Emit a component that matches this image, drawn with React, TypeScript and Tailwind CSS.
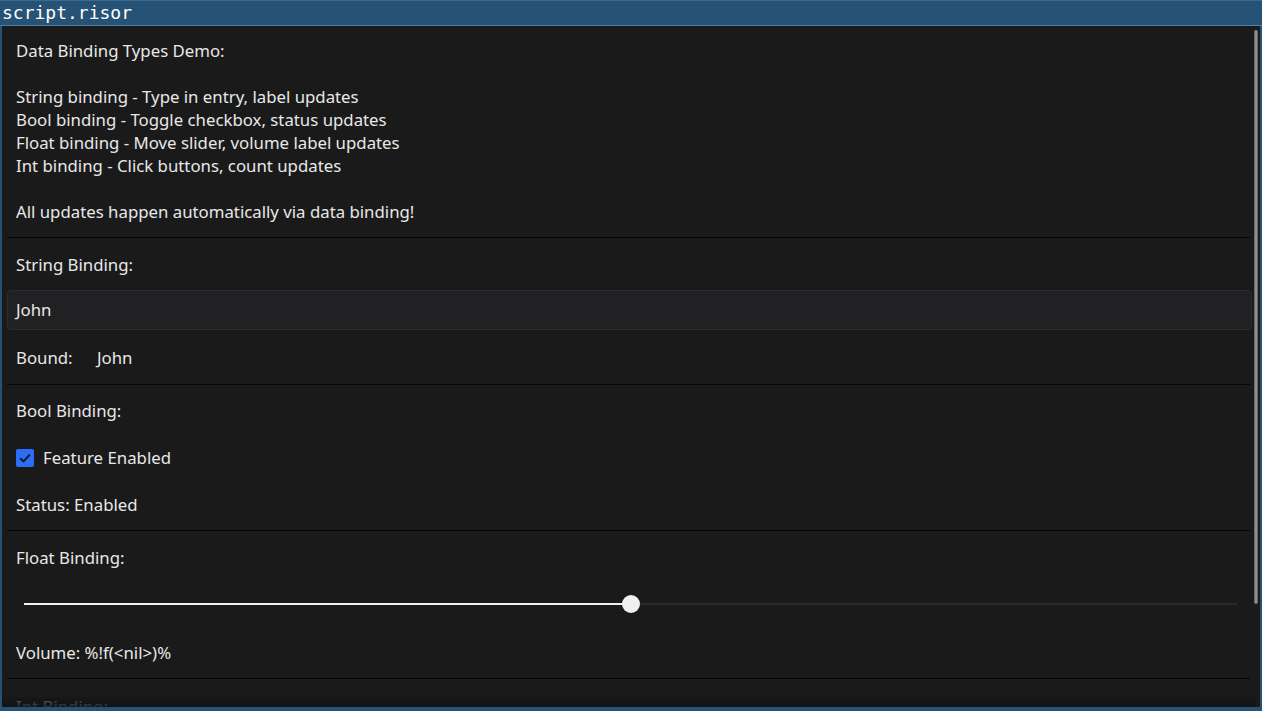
import React from "react";

const intro = [
  "Data Binding Types Demo:",
  "",
  "String binding - Type in entry, label updates",
  "Bool binding - Toggle checkbox, status updates",
  "Float binding - Move slider, volume label updates",
  "Int binding - Click buttons, count updates",
  "",
  "All updates happen automatically via data binding!",
];

function Sep() {
  return <div className="h-px bg-[#050505] mr-[2px] shrink-0" />;
}

function Row({ children, className = "" }: { children: React.ReactNode; className?: string }) {
  return <div className={"h-[47px] shrink-0 flex items-center pl-[9px] " + className}>{children}</div>;
}

export default function App() {
  const volume = 0.5;
  return (
    <div className="w-[1262px] h-[711px] bg-[#255275] flex flex-col overflow-hidden">
      {/* title bar */}
      <div className="h-[26px] shrink-0 border-t border-[#3a6a8e] border-b border-b-[#4f7fa3] flex items-center pl-[2px]">
        <span className="text-white text-[18px] leading-none font-['DejaVu_Sans_Mono',monospace]">script.risor</span>
      </div>

      <div className="relative flex-1 mx-[2px] mb-[4px] bg-[#1a1a1a] overflow-hidden text-[16.8px] text-[#e8e8e8] font-['Noto_Sans',sans-serif]">
        <div className="flex flex-col pl-[5px] pr-[8px]">
          {/* intro */}
          <div className="pt-[13px] pl-[9px] leading-[23px]">
            {intro.map((l, i) => (
              <div key={i} className="h-[23px] whitespace-pre">{l}</div>
            ))}
          </div>
          <div className="mt-[14px]" />
          <Sep />

          {/* string binding */}
          <Row className="mt-[3px]">String Binding:</Row>
          <div className="mt-[2px] h-[40px] shrink-0 bg-[#212124] border border-[#2d2d30] rounded-[4px] flex items-center pl-[8px]">
            John
          </div>
          <Row className="mt-[4px]">
            <span className="w-[81px]">Bound:</span>
            <span>John</span>
          </Row>
          <div className="mt-[3px]" />
          <Sep />

          {/* bool binding */}
          <Row className="mt-[2px]">Bool Binding:</Row>
          <Row>
            <span className="w-[18px] h-[18px] bg-[#2c6cf6] rounded-[2px] flex items-center justify-center mr-[9px]">
              <svg width="14" height="14" viewBox="0 0 14 14" fill="none">
                <path d="M2.2 7.2 L5.6 10.4 L11.8 3.6" stroke="#15181f" strokeWidth="2" />
              </svg>
            </span>
            <span>Feature Enabled</span>
          </Row>
          <Row>Status: Enabled</Row>
          <div className="mt-[2px]" />
          <Sep />

          {/* float binding */}
          <Row className="mt-[3px]">Float Binding:</Row>
          <div className="h-[46px] shrink-0 flex items-center ml-[17px] mr-[15px]">
            <div className="relative w-full h-[2px] bg-[#2a2a2a]">
              <div className="absolute left-0 top-0 h-[2px] bg-[#f0f0f0]" style={{ width: `${volume * 100}%` }} />
              <div
                className="absolute top-[-8px] w-[18px] h-[18px] rounded-full bg-[#f0f0f0] -ml-[9px]"
                style={{ left: `${volume * 100}%` }}
              />
            </div>
          </div>
          <Row className="mt-[2px]">Volume: %!f(&lt;nil&gt;)%</Row>
          <div className="mt-[2px]" />
          <Sep />

          {/* int binding */}
          <Row className="mt-[4px]">Int Binding:</Row>
        </div>

        {/* scrollbar */}
        <div className="absolute right-[2px] top-[4px] w-[4px] h-[574px] rounded-[2px] bg-[#8d8d8d] border-x border-[#6a6a6a]" />
        {/* bottom scroll shadow */}
        <div className="absolute left-0 right-[4px] bottom-0 h-[10px] bg-gradient-to-b from-[#151515]/60 to-[#121212]/90" />
      </div>
    </div>
  );
}
